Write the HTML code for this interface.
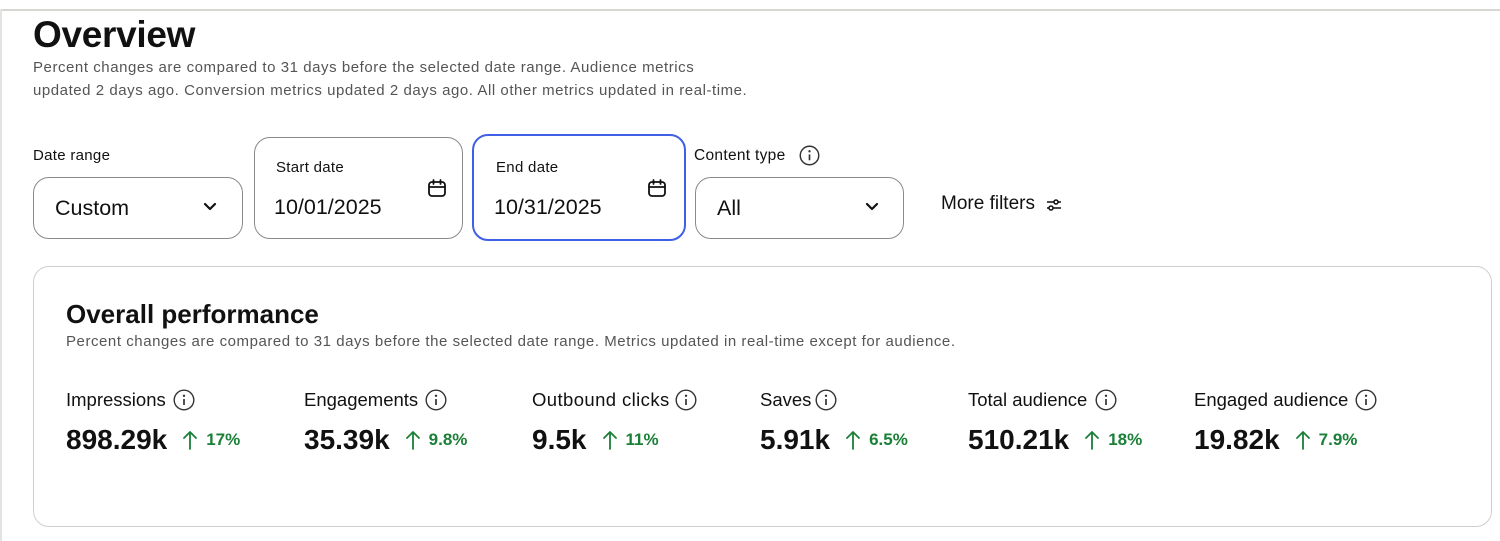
<!DOCTYPE html>
<html><head><meta charset="utf-8"><style>
*{margin:0;padding:0;box-sizing:border-box}
body{width:1500px;height:541px;background:#fff;font-family:"Liberation Sans",sans-serif;color:#111;position:relative;overflow:hidden}
.a{position:absolute;white-space:nowrap}
.box{position:absolute;border:1px solid #8a8a8a;border-radius:16px;background:#fff}
.sm{font-size:15px;color:#555;letter-spacing:0.55px}
.lbl{font-size:15px;color:#111;letter-spacing:0.3px}
.val{font-size:21.5px;color:#111}
.ml{font-size:18.5px;color:#111;line-height:22px}
.mv{font-size:28px;font-weight:bold;color:#111;line-height:32px}
.pc{font-size:17px;font-weight:bold;color:#1a7f37}
.row{display:flex;align-items:center}
.arr{margin:0 9px 0 16px}
</style></head><body>
<div class="a" style="left:0;top:9px;width:1500px;height:2px;background:#d6d6d2"></div>
<div class="a" style="left:0;top:9px;width:2px;height:532px;background:#e3e3e0"></div>
<div class="a" style="left:33px;top:14px;font-size:37px;font-weight:bold;letter-spacing:-0.3px">Overview</div>
<div class="a sm" style="left:33px;top:59px">Percent changes are compared to 31 days before the selected date range. Audience metrics</div>
<div class="a sm" style="left:33px;top:82px">updated 2 days ago. Conversion metrics updated 2 days ago. All other metrics updated in real-time.</div>

<div class="a lbl" style="left:33px;top:147px">Date range</div>
<div class="box" style="left:33px;top:177px;width:210px;height:62px"></div>
<div class="a val" style="left:55px;top:196px">Custom</div>
<svg class="a" style="left:203px;top:202px" width="14" height="10" viewBox="0 0 14 10"><path d="M2 2l5 5 5-5" fill="none" stroke="#111" stroke-width="2.2" stroke-linecap="round" stroke-linejoin="round"/></svg>

<div class="box" style="left:254px;top:137px;width:209px;height:102px"></div>
<div class="a" style="left:276px;top:159px;font-size:15px;letter-spacing:0.3px">Start date</div>
<div class="a val" style="left:274px;top:195px">10/01/2025</div>
<svg class="a" style="left:427px;top:178px" width="20" height="20" viewBox="0 0 20 20"><rect x="2" y="4" width="16" height="14" rx="3" fill="none" stroke="#111" stroke-width="1.8"/><path d="M2 9h16M6.5 2v4M13.5 2v4" stroke="#111" stroke-width="1.8" stroke-linecap="round"/></svg>

<div class="box" style="left:472px;top:134px;width:214px;height:107px;border:2px solid #3f5fe6"></div>
<div class="a" style="left:496px;top:159px;font-size:15px;letter-spacing:0.3px">End date</div>
<div class="a val" style="left:494px;top:195px">10/31/2025</div>
<svg class="a" style="left:647px;top:178px" width="20" height="20" viewBox="0 0 20 20"><rect x="2" y="4" width="16" height="14" rx="3" fill="none" stroke="#111" stroke-width="1.8"/><path d="M2 9h16M6.5 2v4M13.5 2v4" stroke="#111" stroke-width="1.8" stroke-linecap="round"/></svg>

<div class="a lbl" style="left:694px;top:147px;font-size:15.5px">Content type</div>
<svg class="a" style="left:799px;top:145px" width="21" height="21" viewBox="0 0 20 20"><circle cx="10" cy="10" r="8.8" fill="none" stroke="#333" stroke-width="1.4"/><circle cx="10" cy="6" r="1.1" fill="#333"/><path d="M10 9v5.5" stroke="#333" stroke-width="1.6"/></svg>
<div class="box" style="left:695px;top:177px;width:209px;height:62px"></div>
<div class="a val" style="left:717px;top:196px">All</div>
<svg class="a" style="left:865px;top:202px" width="14" height="10" viewBox="0 0 14 10"><path d="M2 2l5 5 5-5" fill="none" stroke="#111" stroke-width="2.2" stroke-linecap="round" stroke-linejoin="round"/></svg>
<div class="a" style="left:941px;top:193px;font-size:19px">More filters</div>
<svg class="a" style="left:1045px;top:197px" width="18" height="16" viewBox="0 0 18 16"><path d="M2 5h14M2 11h14" stroke="#111" stroke-width="1.5"/><circle cx="11" cy="5" r="2" fill="#fff" stroke="#111" stroke-width="1.5"/><circle cx="6" cy="11" r="2" fill="#fff" stroke="#111" stroke-width="1.5"/></svg>

<div class="box" style="left:33px;top:266px;width:1459px;height:261px;border-color:#cfcfcb"></div>
<div class="a" style="left:66px;top:299px;font-size:26px;font-weight:bold">Overall performance</div>
<div class="a sm" style="left:66px;top:333px">Percent changes are compared to 31 days before the selected date range. Metrics updated in real-time except for audience.</div>

<div class="a ml" style="left:66px;top:389px">Impressions</div>
<svg class="a" style="left:173px;top:389px" width="22" height="22" viewBox="0 0 22 22"><circle cx="11" cy="11" r="9.8" fill="none" stroke="#333" stroke-width="1.4"/><circle cx="11" cy="6.8" r="1.2" fill="#333"/><path d="M11 10v6" stroke="#333" stroke-width="1.7"/></svg>
<div class="a row" style="left:66px;top:424px"><span class="mv">898.29k</span><svg class="arr" width="14" height="20" viewBox="0 0 14 20"><path d="M7 19V2M1 8l6-6 6 6" fill="none" stroke="#1a7f37" stroke-width="1.8" stroke-linecap="round" stroke-linejoin="round"/></svg><span class="pc">17%</span></div>

<div class="a ml" style="left:304px;top:389px">Engagements</div>
<svg class="a" style="left:425px;top:389px" width="22" height="22" viewBox="0 0 22 22"><circle cx="11" cy="11" r="9.8" fill="none" stroke="#333" stroke-width="1.4"/><circle cx="11" cy="6.8" r="1.2" fill="#333"/><path d="M11 10v6" stroke="#333" stroke-width="1.7"/></svg>
<div class="a row" style="left:304px;top:424px"><span class="mv">35.39k</span><svg class="arr" width="14" height="20" viewBox="0 0 14 20"><path d="M7 19V2M1 8l6-6 6 6" fill="none" stroke="#1a7f37" stroke-width="1.8" stroke-linecap="round" stroke-linejoin="round"/></svg><span class="pc">9.8%</span></div>

<div class="a ml" style="left:532px;top:389px;letter-spacing:0.4px">Outbound clicks</div>
<svg class="a" style="left:675px;top:389px" width="22" height="22" viewBox="0 0 22 22"><circle cx="11" cy="11" r="9.8" fill="none" stroke="#333" stroke-width="1.4"/><circle cx="11" cy="6.8" r="1.2" fill="#333"/><path d="M11 10v6" stroke="#333" stroke-width="1.7"/></svg>
<div class="a row" style="left:532px;top:424px"><span class="mv">9.5k</span><svg class="arr" width="14" height="20" viewBox="0 0 14 20"><path d="M7 19V2M1 8l6-6 6 6" fill="none" stroke="#1a7f37" stroke-width="1.8" stroke-linecap="round" stroke-linejoin="round"/></svg><span class="pc">11%</span></div>

<div class="a ml" style="left:760px;top:389px">Saves</div>
<svg class="a" style="left:815px;top:389px" width="22" height="22" viewBox="0 0 22 22"><circle cx="11" cy="11" r="9.8" fill="none" stroke="#333" stroke-width="1.4"/><circle cx="11" cy="6.8" r="1.2" fill="#333"/><path d="M11 10v6" stroke="#333" stroke-width="1.7"/></svg>
<div class="a row" style="left:760px;top:424px"><span class="mv">5.91k</span><svg class="arr" width="14" height="20" viewBox="0 0 14 20"><path d="M7 19V2M1 8l6-6 6 6" fill="none" stroke="#1a7f37" stroke-width="1.8" stroke-linecap="round" stroke-linejoin="round"/></svg><span class="pc">6.5%</span></div>

<div class="a ml" style="left:968px;top:389px">Total audience</div>
<svg class="a" style="left:1095px;top:389px" width="22" height="22" viewBox="0 0 22 22"><circle cx="11" cy="11" r="9.8" fill="none" stroke="#333" stroke-width="1.4"/><circle cx="11" cy="6.8" r="1.2" fill="#333"/><path d="M11 10v6" stroke="#333" stroke-width="1.7"/></svg>
<div class="a row" style="left:968px;top:424px"><span class="mv">510.21k</span><svg class="arr" width="14" height="20" viewBox="0 0 14 20"><path d="M7 19V2M1 8l6-6 6 6" fill="none" stroke="#1a7f37" stroke-width="1.8" stroke-linecap="round" stroke-linejoin="round"/></svg><span class="pc">18%</span></div>

<div class="a ml" style="left:1194px;top:389px">Engaged audience</div>
<svg class="a" style="left:1355px;top:389px" width="22" height="22" viewBox="0 0 22 22"><circle cx="11" cy="11" r="9.8" fill="none" stroke="#333" stroke-width="1.4"/><circle cx="11" cy="6.8" r="1.2" fill="#333"/><path d="M11 10v6" stroke="#333" stroke-width="1.7"/></svg>
<div class="a row" style="left:1194px;top:424px"><span class="mv">19.82k</span><svg class="arr" width="14" height="20" viewBox="0 0 14 20"><path d="M7 19V2M1 8l6-6 6 6" fill="none" stroke="#1a7f37" stroke-width="1.8" stroke-linecap="round" stroke-linejoin="round"/></svg><span class="pc">7.9%</span></div>
</body></html>
